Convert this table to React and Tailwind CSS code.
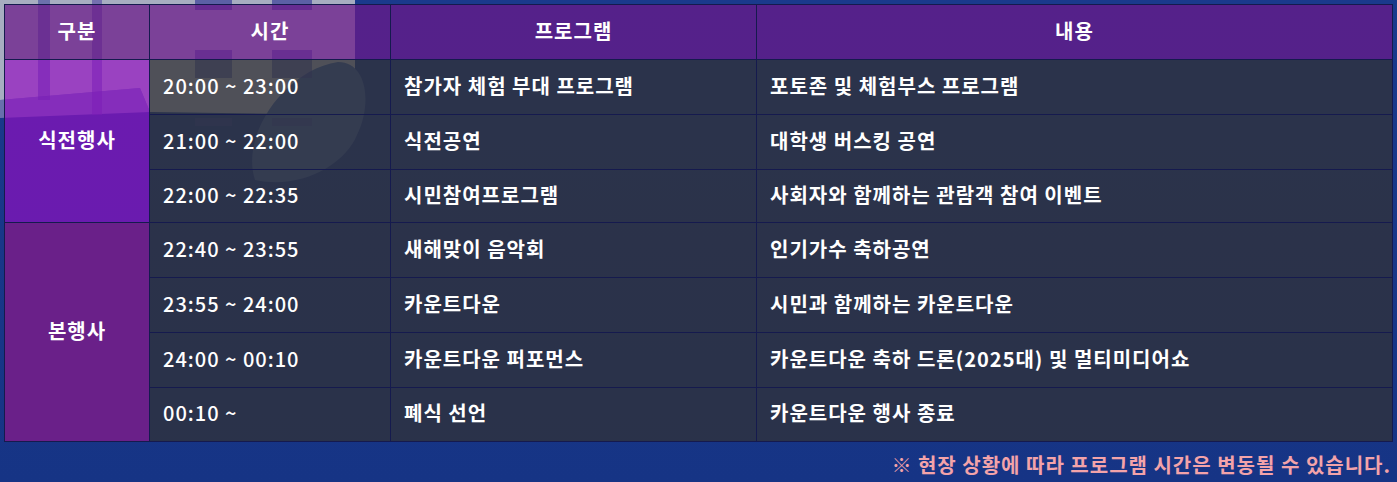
import React from "react";

const rows = [
  { time: "20:00 ~ 23:00", prog: "참가자 체험 부대 프로그램", desc: "포토존 및 체험부스 프로그램", h: "h-[55px]" },
  { time: "21:00 ~ 22:00", prog: "식전공연", desc: "대학생 버스킹 공연", h: "h-[55px]" },
  { time: "22:00 ~ 22:35", prog: "시민참여프로그램", desc: "사회자와 함께하는 관람객 참여 이벤트", h: "h-[53px]" },
  { time: "22:40 ~ 23:55", prog: "새해맞이 음악회", desc: "인기가수 축하공연", h: "h-[55px]" },
  { time: "23:55 ~ 24:00", prog: "카운트다운", desc: "시민과 함께하는 카운트다운", h: "h-[55px]" },
  { time: "24:00 ~ 00:10", prog: "카운트다운 퍼포먼스", desc: "카운트다운 축하 드론(2025대) 및 멀티미디어쇼", h: "h-[55px]" },
  { time: "00:10 ~", prog: "폐식 선언", desc: "카운트다운 행사 종료", h: "h-[54px]" },
];

export default function App() {
  const font = { fontFamily: '"Noto Sans CJK KR", "Noto Sans", sans-serif' };
  const base = "border border-[#151a4e] bg-[rgba(50,50,54,0.75)] px-[13px] pb-[3px] text-left align-middle text-[20px] tracking-[1px] text-white";
  return (
    <div className="relative h-[482px] w-[1397px] overflow-hidden bg-gradient-to-b from-[#1a3a8c] to-[#163485]" style={font}>
      {/* decorative background art */}
      <svg className="absolute left-0 top-0" width="420" height="240" viewBox="0 0 420 240">
        <path d="M0 0 H355 V115 L150 112 L140 88 L0 100 Z" fill="#a7adc0" />
        <path d="M0 100 L140 88 L150 112 L0 118 Z" fill="#b8a6cf" opacity="0.5" />
        <path d="M255 180 C240 135 285 70 338 62 C368 62 372 105 357 135 C345 165 300 190 255 180 Z" fill="#3d5ba0" />
        <rect x="38" y="0" width="12" height="100" fill="#3a3f9a" opacity="0.55" />
        <rect x="92" y="0" width="10" height="115" fill="#4a3ea0" opacity="0.55" />
        <rect x="195" y="0" width="37" height="10" fill="#3a3f9a" opacity="0.7" />
        <rect x="272" y="0" width="40" height="10" fill="#3a3f9a" opacity="0.7" />
        <rect x="195" y="50" width="37" height="28" fill="#3a3f9a" opacity="0.6" />
        <rect x="272" y="50" width="40" height="28" fill="#3a3f9a" opacity="0.6" />
        <rect x="195" y="118" width="37" height="8" fill="#3a3f9a" opacity="0.5" />
        <rect x="272" y="118" width="40" height="8" fill="#3a3f9a" opacity="0.5" />
      </svg>
      <div className="relative px-[4px] pt-[4px]">
        <table className="w-[1388px] table-fixed border-collapse">
          <colgroup>
            <col className="w-[145px]" />
            <col className="w-[241px]" />
            <col className="w-[366px]" />
            <col className="w-[636px]" />
          </colgroup>
          <thead>
            <tr className="h-[55px]">
              {["구분", "시간", "프로그램", "내용"].map((t) => (
                <th key={t} className="border border-[#151a4e] bg-[rgba(107,24,137,0.73)] pb-[3px] text-center text-[20px] tracking-[1px] font-bold text-white">
                  {t}
                </th>
              ))}
            </tr>
          </thead>
          <tbody>
            {rows.map((r, i) => (
              <tr key={i} className={r.h}>
                {i === 0 && (
                  <td rowSpan={3} className="border border-[#151a4e] bg-[rgba(148,13,194,0.67)] pb-[3px] text-center text-[20px] tracking-[1px] font-bold text-white">
                    식전행사
                  </td>
                )}
                {i === 3 && (
                  <td rowSpan={4} className="border border-[#151a4e] bg-[#6a2089] pb-[3px] text-center text-[20px] tracking-[1px] font-bold text-white">
                    본행사
                  </td>
                )}
                <td className={`${base} font-medium`}>{r.time}</td>
                <td className={`${base} font-semibold`}>{r.prog}</td>
                <td className={`${base} font-semibold`}>{r.desc}</td>
              </tr>
            ))}
          </tbody>
        </table>
        <div className="flex justify-end pr-[2px] pt-[8px]">
          <p className="text-[20px] tracking-[1px] font-bold text-[#f3a3a9]">※ 현장 상황에 따라 프로그램 시간은 변동될 수 있습니다.</p>
        </div>
      </div>
    </div>
  );
}
